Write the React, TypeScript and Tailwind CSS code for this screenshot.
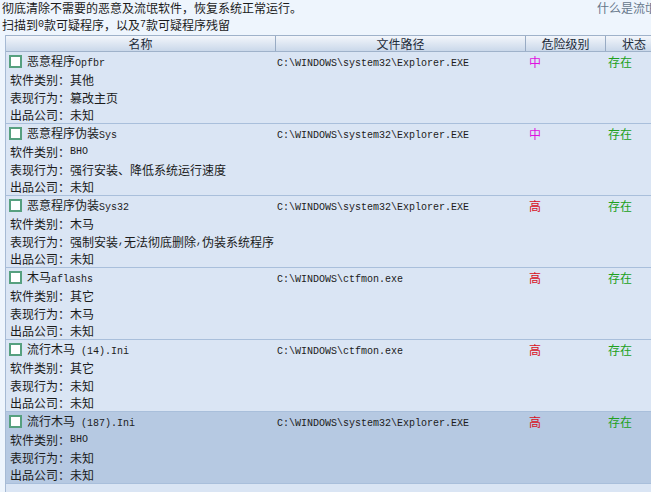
import React from "react";

const CJK = "font-['Noto_Sans_CJK_SC','Noto_Sans',sans-serif]";

function T({ s }: { s: string }) {
  const parts = s.split(/([\x00-\x7f]+)/).filter((p) => p.length > 0);
  return (
    <>
      {parts.map((p, i) =>
        /^[\x00-\x7f]+$/.test(p) ? (
          <span key={i} className="font-['Liberation_Mono',monospace] text-[10px] whitespace-pre">
            {p}
          </span>
        ) : (
          <span key={i}>{p}</span>
        )
      )}
    </>
  );
}

type Row = {
  name: string;
  path: string;
  level: "中" | "高";
  type: string;
  behavior: string;
  company: string;
  selected?: boolean;
};

const rows: Row[] = [
  { name: "恶意程序Opfbr", path: "C:\\WINDOWS\\system32\\Explorer.EXE", level: "中", type: "其他", behavior: "篡改主页", company: "未知" },
  { name: "恶意程序伪装Sys", path: "C:\\WINDOWS\\system32\\Explorer.EXE", level: "中", type: "BHO", behavior: "强行安装、降低系统运行速度", company: "未知" },
  { name: "恶意程序伪装Sys32", path: "C:\\WINDOWS\\system32\\Explorer.EXE", level: "高", type: "木马", behavior: "强制安装,无法彻底删除,伪装系统程序", company: "未知" },
  { name: "木马aflashs", path: "C:\\WINDOWS\\ctfmon.exe", level: "高", type: "其它", behavior: "木马", company: "未知" },
  { name: "流行木马 (14).Ini", path: "C:\\WINDOWS\\ctfmon.exe", level: "高", type: "其它", behavior: "未知", company: "未知" },
  { name: "流行木马 (187).Ini", path: "C:\\WINDOWS\\system32\\Explorer.EXE", level: "高", type: "BHO", behavior: "未知", company: "未知", selected: true },
];

function DataRow({ r }: { r: Row }) {
  return (
    <div
      className={`h-[72px] border-b border-[#a9bfdb] ${r.selected ? "bg-[#b6c9e2]" : "bg-[#dae5f4]"} text-[12px] text-[#1b1b1b] leading-none`}
    >
      <div className="grid grid-cols-[270px_250px_80px_80px] h-[19px] items-center">
        <div className="flex items-center pl-[3px] gap-[5px]">
          <div className="w-[13px] h-[13px] border-2 border-[#56a07f] bg-white shrink-0" />
          <span className="whitespace-pre"><T s={r.name} /></span>
        </div>
        <div className="pl-[1px] whitespace-pre"><T s={r.path} /></div>
        <div className={`pl-[3px] ${r.level === "中" ? "text-[#e010e0]" : "text-[#d8101c]"}`}>{r.level}</div>
        <div className="pl-[2px] text-[#20a020]">存在</div>
      </div>
      <div className="h-[18px] flex items-center pl-[4px] whitespace-pre"><T s={"软件类别：" + r.type} /></div>
      <div className="h-[18px] flex items-center pl-[4px] whitespace-pre"><T s={"表现行为：" + r.behavior} /></div>
      <div className="h-[16px] flex items-center pl-[4px] whitespace-pre"><T s={"出品公司：" + r.company} /></div>
    </div>
  );
}

export default function App() {
  return (
    <div className={`w-[651px] h-[492px] overflow-hidden bg-[#eef5fd] ${CJK} text-[12px] text-[#1b1b1b]`}>
      <div className="h-[15px] flex items-center justify-between pl-[2px] whitespace-nowrap">
        <span className="leading-none">彻底清除不需要的恶意及流氓软件，恢复系统正常运行。</span>
        <span className="leading-none text-[#65758a] underline w-[54px] overflow-hidden shrink-0">什么是流氓软件</span>
      </div>
      <div className="h-[20px] flex items-center pl-[2px] leading-none whitespace-pre">
        <T s="扫描到0款可疑程序，以及7款可疑程序残留" />
      </div>
      <div className="ml-[5px] border-l border-[#a6bad4] w-[700px]">
        <div className="h-[17px] grid grid-cols-[270px_250px_80px_100px] border-t border-b border-[#9fb2ca] bg-gradient-to-b from-[#f3f6fb] to-[#cad8ea] text-[#1d2b3a] leading-none">
          <div className="flex items-center justify-center border-r border-[#98abc4]">名称</div>
          <div className="flex items-center justify-center border-r border-[#98abc4]">文件路径</div>
          <div className="flex items-center justify-center border-r border-[#98abc4]">危险级别</div>
          <div className="flex items-center pl-[16px]">状态</div>
        </div>
        {rows.map((r, i) => (
          <DataRow key={i} r={r} />
        ))}
        <div className="h-[20px] bg-[#dae5f4]" />
      </div>
    </div>
  );
}
